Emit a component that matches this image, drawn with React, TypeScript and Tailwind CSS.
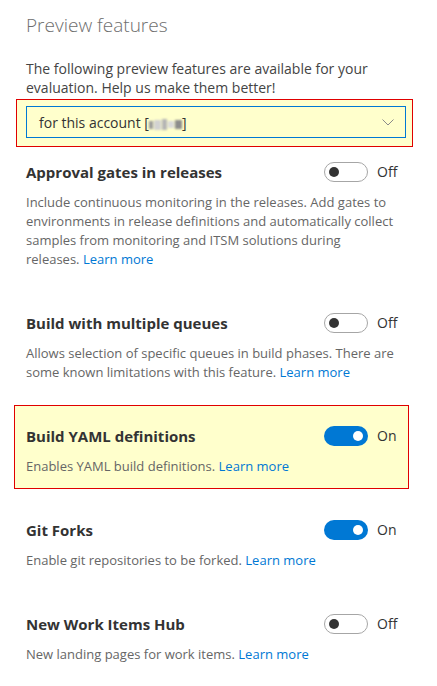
import React from "react";

type Feature = {
  title: string;
  desc: string;
  on: boolean;
  highlight?: boolean;
};

const features: Feature[] = [
  {
    title: "Approval gates in releases",
    desc: "Include continuous monitoring in the releases. Add gates to environments in release definitions and automatically collect samples from monitoring and ITSM solutions during releases.",
    on: false,
  },
  {
    title: "Build with multiple queues",
    desc: "Allows selection of specific queues in build phases. There are some known limitations with this feature.",
    on: false,
  },
  {
    title: "Build YAML definitions",
    desc: "Enables YAML build definitions.",
    on: true,
    highlight: true,
  },
  {
    title: "Git Forks",
    desc: "Enable git repositories to be forked.",
    on: true,
  },
  {
    title: "New Work Items Hub",
    desc: "New landing pages for work items.",
    on: false,
  },
];

function Toggle({ on }: { on: boolean }) {
  return on ? (
    <div className="flex h-[20px] w-[44px] items-center justify-end rounded-full bg-[#0078d4] pr-[5px]">
      <div className="h-[10px] w-[10px] rounded-full bg-white" />
    </div>
  ) : (
    <div className="flex h-[20px] w-[44px] items-center rounded-full border border-[#a6a6a6] bg-white pl-[4px]">
      <div className="h-[10px] w-[10px] rounded-full bg-[#333333]" />
    </div>
  );
}

function Section({ f }: { f: Feature }) {
  return (
    <div
      className={
        "w-[395px] border px-[11px] pt-[20px] pb-[12px] " +
        (f.highlight ? "border-[#e00000] bg-[#ffffcc]" : "border-transparent")
      }
    >
      <div className="flex h-[20px] items-center">
        <div className="flex-1 text-[15px] font-bold leading-[20px] text-[#333333]">{f.title}</div>
        <Toggle on={f.on} />
        <div className="ml-[9px] w-[20px] text-[14px] leading-[20px] text-[#333333]">{f.on ? "On" : "Off"}</div>
      </div>
      <p className="mt-[11px] text-[13px] leading-[19px] text-[#666666]">
        {f.desc} <span className="text-[#0078d4]">Learn more</span>
      </p>
    </div>
  );
}

export default function App() {
  return (
    <div className="h-[686px] w-[437px] overflow-hidden bg-white font-['Open_Sans',sans-serif]">
      <div className="px-[26px] pt-[11px]">
        <h1 className="text-[19px] font-light leading-[28px] text-[#6e6e6e]">Preview features</h1>
        <p className="mt-[20px] w-[375px] text-[14px] leading-[19px] text-[#444444]">
          The following preview features are available for your evaluation. Help us make them better!
        </p>
      </div>
      <div className="ml-[16px] mt-[2px] w-[397px] border border-[#e00000] bg-[#ffffcc] pl-[9px] pr-[6px] pt-[6px] pb-[8px]">
        <div className="flex h-[32px] items-center border border-[#0078d4] pl-[12px] pr-[11px]">
          <span className="flex-1 text-[14px] text-[#333333]">
            for this account [
            <span className="relative top-[1px] inline-flex h-[11px] w-[33px] items-center gap-[1px] align-middle blur-[0.8px]">
              <span className="h-[8px] w-[4px] bg-[#9a9a9a]" />
              <span className="h-[10px] w-[7px] bg-[#d2d2d2]" />
              <span className="h-[11px] w-[5px] bg-[#b5b5b5]" />
              <span className="h-[7px] w-[6px] bg-[#dadada]" />
              <span className="h-[9px] w-[7px] bg-[#8c8c8c]" />
            </span>
            ]
          </span>
          <svg width="12" height="7" viewBox="0 0 12 7" fill="none">
            <path d="M0.5 0.5 L6 6 L11.5 0.5" stroke="#8a8a8a" strokeWidth="1" />
          </svg>
        </div>
      </div>
      <div className="ml-[14px] mt-[-6px] flex flex-col gap-[10px]">
        {features.map((f) => (
          <Section key={f.title} f={f} />
        ))}
      </div>
    </div>
  );
}
